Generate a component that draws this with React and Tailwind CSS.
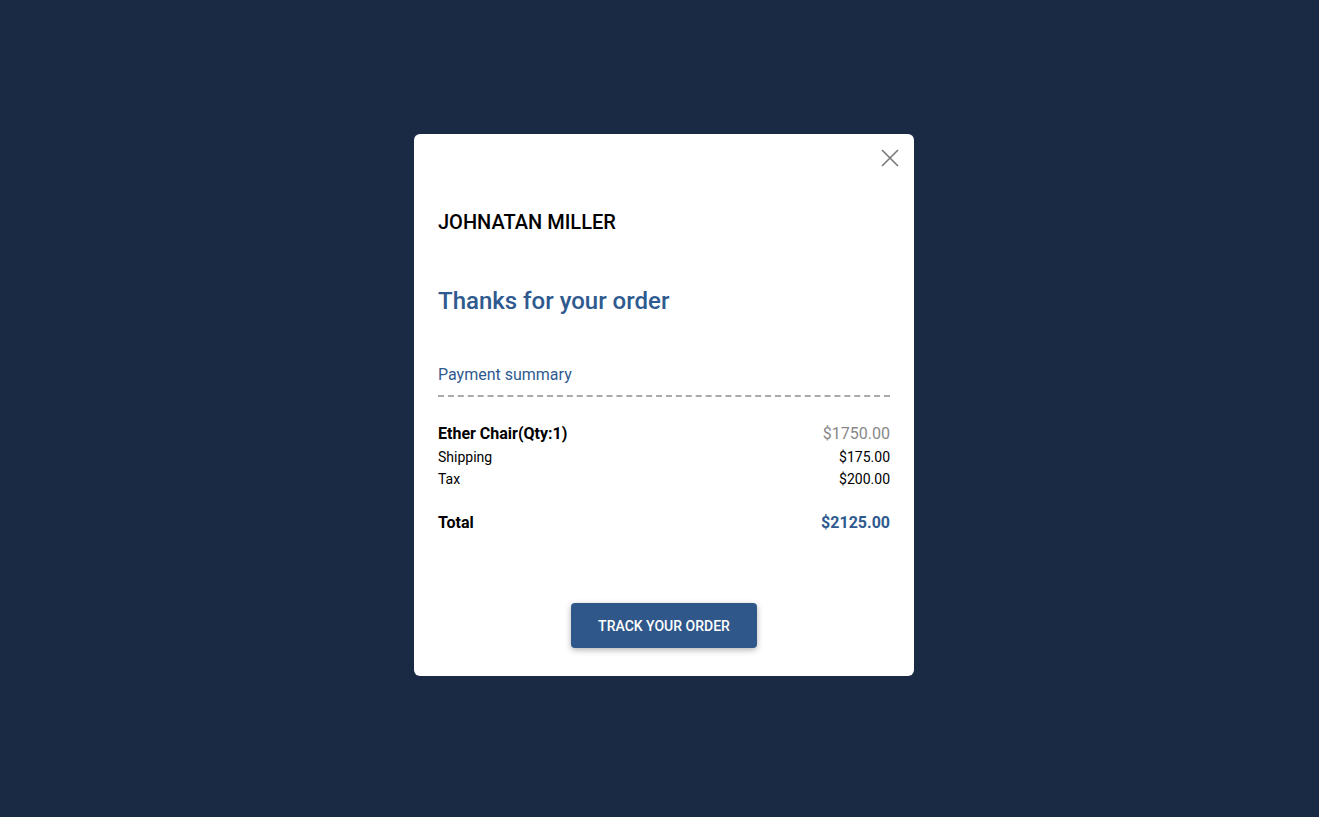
import React from 'react';

const Row = ({ label, value, className = '', valueClass = '' }) => (
    <div className={`flex items-center justify-between ${className}`}>
        <span>{label}</span>
        <span className={valueClass}>{value}</span>
    </div>
);

const App = () => {
    return (
        <div className="min-h-screen w-full bg-[#1a2a44] flex items-center justify-center pl-[9px] pb-[7px]" style={{ fontFamily: 'Roboto, "Noto Sans", sans-serif' }}>
            <div className="w-[500px] h-[542px] bg-white rounded-md px-6 pt-[14px] pb-7 flex flex-col">
                <div className="flex justify-end -mr-[10px]">
                    <button className="w-[20px] h-[20px] flex items-center justify-center text-[#777]">
                        <svg width="20" height="20" viewBox="0 0 20 20" fill="none" stroke="currentColor" strokeWidth="1.6">
                            <path d="M2 2L18 18M18 2L2 18" />
                        </svg>
                    </button>
                </div>

                <h2 className="mt-[40px] text-[20px] leading-[28px] font-medium text-black">JOHNATAN MILLER</h2>

                <h1 className="mt-[49px] text-[24px] leading-[32px] font-medium text-[#2f5a8f]">Thanks for your order</h1>

                <div className="mt-[46px] text-[16px] leading-[24px] text-[#2f5a8f]">Payment summary</div>
                <div className="mt-[8px] border-t-2 border-dashed border-[#aaa]"></div>

                <div className="mt-[25px] text-black">
                    <Row label="Ether Chair(Qty:1)" value="$1750.00" className="text-[16px] leading-[24px] font-bold" valueClass="font-normal text-[#888]" />
                    <Row label="Shipping" value="$175.00" className="text-[14px] leading-[22px]" />
                    <Row label="Tax" value="$200.00" className="text-[14px] leading-[22px]" />
                    <Row label="Total" value="$2125.00" className="mt-[21px] text-[16px] leading-[24px] font-bold" valueClass="text-[#2f5a8f]" />
                </div>

                <div className="mt-auto flex justify-center">
                    <button className="w-[186px] h-[45px] pt-[2px] bg-[#30578a] text-white text-[14px] font-medium rounded shadow-[0_2px_6px_rgba(0,0,0,0.3)]">
                        TRACK YOUR ORDER
                    </button>
                </div>
            </div>
        </div>
    );
};

export default App;
